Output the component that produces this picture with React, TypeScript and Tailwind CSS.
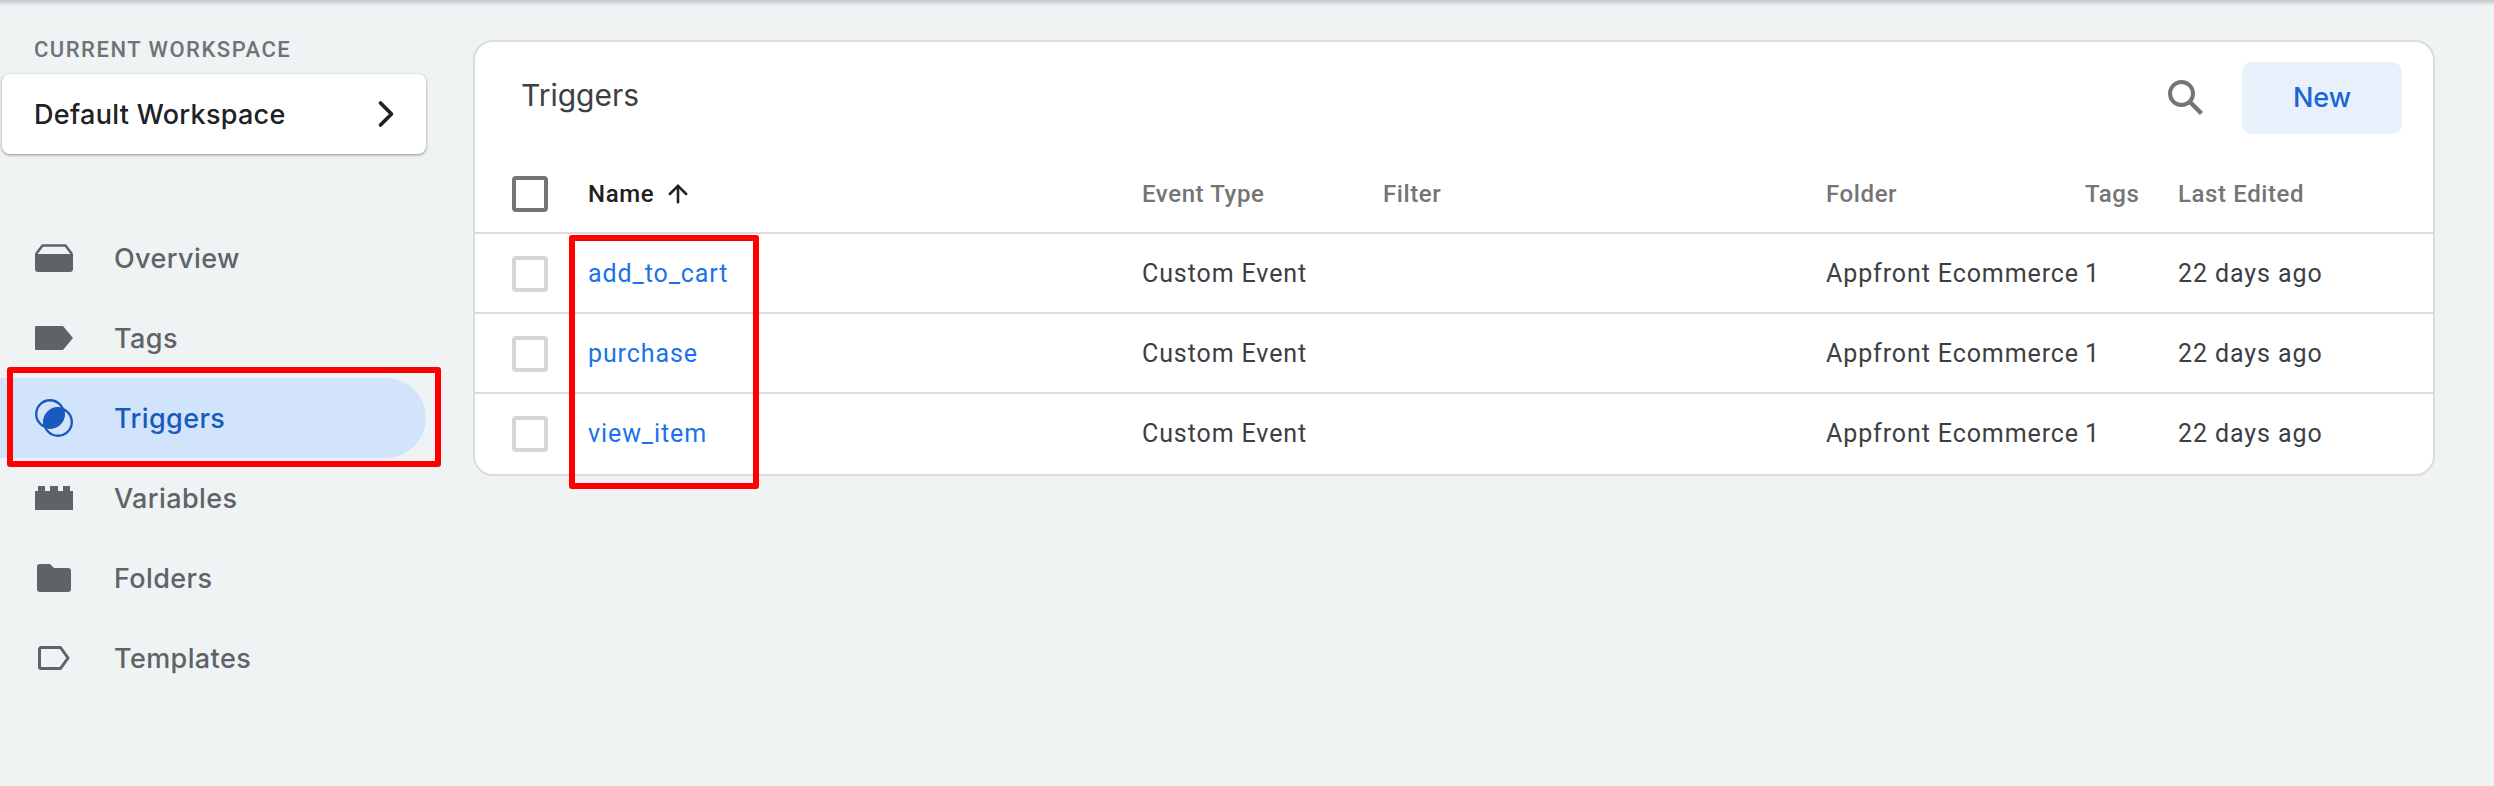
import { ArrowUp, ChevronRight } from "lucide-react"

const rows = ["add_to_cart", "purchase", "view_item"]

const gridCols = "grid grid-cols-[113px_554px_241px_443px_259px_93px_1fr] items-center"

function OverviewIcon() {
  return (
    <svg width="38" height="28" viewBox="0 0 38 28" fill="none">
      <path d="M1.500 9.500 7.500 1.500h23l6 8" stroke="#5f6368" strokeWidth="2.500" strokeLinejoin="round" strokeLinecap="round" />
      <path d="M0 10h38v15a3 3 0 0 1-3 3H3a3 3 0 0 1-3-3z" fill="#5f6368" />
    </svg>
  )
}

function TagIcon() {
  return (
    <svg width="38" height="24" viewBox="0 0 38 24">
      <path d="M0 1a1 1 0 0 1 1-1h27l10 12-10 12H1a1 1 0 0 1-1-1z" fill="#5f6368" />
    </svg>
  )
}

function TriggerIcon() {
  return (
    <svg width="38" height="38" viewBox="0 0 38 38" fill="none">
      <ellipse cx="19" cy="19" rx="12.200" ry="8.800" transform="rotate(-45 19 19)" fill="#185abc" />
      <circle cx="15" cy="15" r="13.800" stroke="#185abc" strokeWidth="2.400" />
      <circle cx="23" cy="23" r="13.800" stroke="#185abc" strokeWidth="2.400" />
    </svg>
  )
}

function VariableIcon() {
  return (
    <svg width="38" height="24" viewBox="0 0 38 24">
      <path d="M0 5h3V0h7v5h5V0h8v5h5V0h7v5h3v19H0z" fill="#5f6368" />
    </svg>
  )
}

function FolderIcon() {
  return (
    <svg width="34" height="28" viewBox="0 0 34 28">
      <path d="M3 0h10l4 4h14a3 3 0 0 1 3 3v18a3 3 0 0 1-3 3H3a3 3 0 0 1-3-3V3a3 3 0 0 1 3-3z" fill="#5f6368" />
    </svg>
  )
}

function TemplateIcon() {
  return (
    <svg width="32" height="24" viewBox="0 0 32 24" fill="none">
      <path d="M3 1.500h19.500L30 12l-7.500 10.500H3A1.500 1.500 0 0 1 1.500 21V3A1.500 1.500 0 0 1 3 1.500z" stroke="#5f6368" strokeWidth="3" strokeLinejoin="round" />
    </svg>
  )
}

function SearchIcon() {
  return (
    <svg width="36" height="36" viewBox="0 0 36 36" fill="none">
      <circle cx="13.500" cy="13.500" r="11.500" stroke="#757575" strokeWidth="4" />
      <path d="M21.500 21.500 33.500 33.500" stroke="#757575" strokeWidth="4.500" />
    </svg>
  )
}

const navItems = [
  { label: "Overview", icon: <OverviewIcon /> },
  { label: "Tags", icon: <TagIcon /> },
  { label: "Triggers", icon: <TriggerIcon />, active: true },
  { label: "Variables", icon: <VariableIcon /> },
  { label: "Folders", icon: <FolderIcon /> },
  { label: "Templates", icon: <TemplateIcon /> },
]

function Checkbox({ header }: { header?: boolean }) {
  return (
    <div
      className={
        header
          ? "ml-[37px] h-[36px] w-[36px] rounded-[4px] border-[4px] border-[#757575]"
          : "ml-[37px] h-[36px] w-[36px] rounded-[4px] border-[4px] border-[#d6d6d6]"
      }
    />
  )
}

function Sidebar() {
  return (
    <aside className="w-[473px] shrink-0 font-['Inter',sans-serif]">
      <div className="pl-[34px] pt-[36px] font-['Roboto',sans-serif] text-[22px] leading-[28px] font-medium tracking-[1.5px] text-[#6f7377]">
        CURRENT WORKSPACE
      </div>
      <div className="ml-[2px] mt-[10px] flex h-[80px] w-[424px] items-center justify-between rounded-[8px] bg-white pl-[32px] pr-[18px] shadow-[0_1px_3px_rgba(60,64,67,0.55)]">
        <span className="mt-[2px] text-[27px] tracking-[0.3px] font-medium text-[#202124]">Default Workspace</span>
        <ChevronRight size={44} strokeWidth={2} className="text-[#202124]" />
      </div>
      <nav className="mt-[64px]">
        {navItems.map((item) => (
          <div
            key={item.label}
            className={
              item.active
                ? "relative flex h-[80px] w-[426px] items-center rounded-r-[40px] bg-[#d2e3fc] text-[#185abc]"
                : "relative flex h-[80px] w-[426px] items-center text-[#5f6368]"
            }
          >
            <div className="ml-[35px] mr-[41px] flex w-[38px] shrink-0 justify-center">{item.icon}</div>
            <span className="mt-[2px] text-[27px] tracking-[0.4px] font-medium">{item.label}</span>
            {item.active && (
              <div className="absolute left-[7px] top-[-11px] h-[100px] w-[434px] rounded-[3px] border-[6px] border-[#ff0000]" />
            )}
          </div>
        ))}
      </nav>
    </aside>
  )
}

function TriggersCard() {
  return (
    <main className="mt-[40px] mb-auto mr-[59px] flex-1 rounded-[20px] border-2 border-[#dadce0] bg-white font-['Roboto',sans-serif]">
      <div className="flex h-[94px] items-start justify-between pl-[46px] pr-[31px] pt-[20px]">
        <h1 className="mt-[9px] font-['Inter',sans-serif] text-[30px] leading-[48px] font-normal text-[#3c4043]">Triggers</h1>
        <div className="flex items-center gap-[38px]">
          <SearchIcon />
          <button className="h-[72px] w-[160px] rounded-[10px] bg-[#e8f0fc] font-['Inter',sans-serif] text-[27px] font-medium text-[#1967d2]">
            New
          </button>
        </div>
      </div>
      <div className={`${gridCols} h-[98px] border-b-2 border-[#dadce0] pt-[20px] text-[24px] font-medium tracking-[0.6px] text-[#757575]`}>
        <Checkbox header />
        <div className="flex items-center gap-[10px] text-[#202124]">
          Name
          <ArrowUp size={28} strokeWidth={2.2} />
        </div>
        <div>Event Type</div>
        <div>Filter</div>
        <div>Folder</div>
        <div>Tags</div>
        <div>Last Edited</div>
      </div>
      <div className="relative">
        {rows.map((name, i) => (
          <div
            key={name}
            className={
              i < rows.length - 1
                ? `${gridCols} h-[80px] border-b-2 border-[#dadce0] pt-[2px] text-[25px] tracking-[0.9px] text-[#3c4043]`
                : `${gridCols} h-[80px] text-[25px] tracking-[0.9px] text-[#3c4043]`
            }
          >
            <Checkbox />
            <div className="text-[#1a73e8]">{name}</div>
            <div>Custom Event</div>
            <div />
            <div>Appfront Ecommerce</div>
            <div>1</div>
            <div>22 days ago</div>
          </div>
        ))}
        <div className="absolute left-[94px] top-[1px] h-[254px] w-[190px] rounded-[3px] border-[6px] border-[#ff0000]" />
      </div>
    </main>
  )
}

export default function App() {
  return (
    <div className="relative flex h-[786px] w-full overflow-hidden bg-[#eff3f4]">
      <div className="absolute inset-x-0 top-0 h-[6px] bg-gradient-to-b from-[#c4c8cb] to-[#eff3f4]" />
      <Sidebar />
      <TriggersCard />
    </div>
  )
}
